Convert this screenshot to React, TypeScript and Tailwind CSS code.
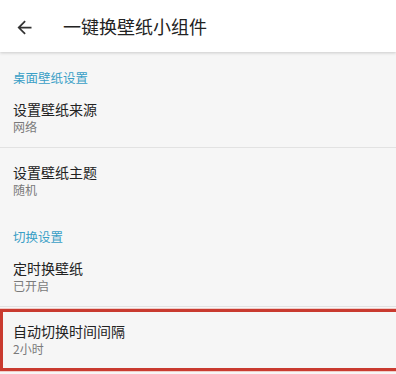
const font = { fontFamily: '"Noto Sans CJK SC", "Noto Sans", sans-serif' };

type Item = { title: string; summary: string; divider?: boolean; marked?: boolean };

const groups: { name: string; items: Item[] }[] = [
  {
    name: "桌面壁纸设置",
    items: [
      { title: "设置壁纸来源", summary: "网络", divider: true },
      { title: "设置壁纸主题", summary: "随机" },
    ],
  },
  {
    name: "切换设置",
    items: [
      { title: "定时换壁纸", summary: "已开启", divider: true },
      { title: "自动切换时间间隔", summary: "2小时", marked: true },
    ],
  },
];

function PrefRow({ item }: { item: Item }) {
  return (
    <div
      className={`relative h-[63px] px-[13px] pt-[15px] ${
        item.divider ? "border-b border-[#e2e2e2]" : ""
      }`}>
      <div className="text-[14px] leading-[18px] text-[#222222]">{item.title}</div>
      <div className="text-[12px] leading-[18px] text-[#7a7a7a]">{item.summary}</div>
      {item.marked ? (
        <div className="pointer-events-none absolute -right-3 bottom-[-1px] left-0 top-[2px] border-[3px] border-[#c93a2f] shadow-[0_0_0_1px_rgba(230,120,110,0.35)]" />
      ) : null}
    </div>
  );
}

export default function App() {
  return (
    <div className="h-[374px] w-[396px] overflow-hidden bg-[#f6f6f6]" style={font}>
      <header className="relative z-10 flex h-[52px] items-center bg-white shadow-[0_1px_3px_rgba(0,0,0,0.18)]">
        <svg viewBox="0 0 24 24" className="ml-[14px] mt-[2px] h-[21px] w-[21px] fill-[#333333]">
          <path d="M20 11H7.83l5.59-5.59L12 4l-8 8 8 8 1.41-1.41L7.83 13H20v-2z" />
        </svg>
        <h1 className="ml-[28px] mt-[1px] text-[18px] font-normal text-[#222222]">一键换壁纸小组件</h1>
      </header>

      {groups.map((group) => (
        <section key={group.name}>
          <div className="h-[33px] px-[13px] pt-[18px] text-[12.5px] leading-[16px] text-[#3a9fc6]">
            {group.name}
          </div>
          {group.items.map((item) => (
            <PrefRow key={item.title} item={item} />
          ))}
        </section>
      ))}
    </div>
  );
}
